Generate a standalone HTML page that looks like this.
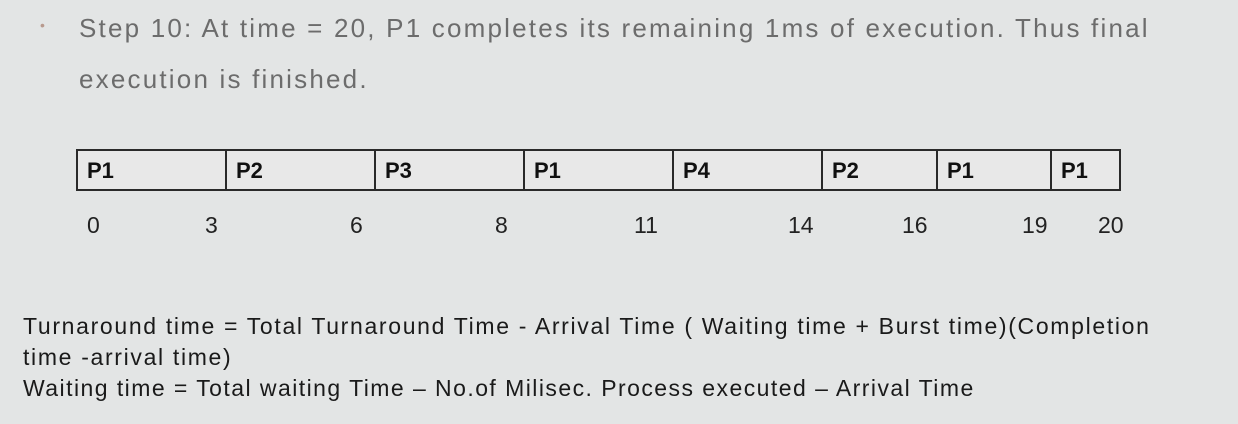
<!DOCTYPE html>
<html><head><meta charset="utf-8"><style>
html,body{margin:0;padding:0}
body{width:1238px;height:424px;background:#e3e5e5;position:relative;overflow:hidden;font-family:"Liberation Sans",sans-serif}
.t{position:absolute;white-space:nowrap}
.step{color:#6c6c6c;font-size:26px;letter-spacing:2.2px}
.cell{position:absolute;top:149px;height:42px;border:2px solid #2a2a2a;border-right:none;background:#e8e8e8;box-sizing:border-box}
.cell b{position:absolute;left:9px;top:7px;font-size:22px;color:#111}
.n{position:absolute;top:212px;font-size:23px;color:#222}
.f{color:#1a1a1a;font-size:23px;letter-spacing:1.67px}
</style></head><body>
<div class="t" style="left:40px;top:17px;color:#b89a8e;font-size:14px">•</div>
<div class="t step" style="left:79px;top:13px">Step 10: At time = 20, P1 completes its remaining 1ms of execution. Thus final</div>
<div class="t step" style="left:79px;top:64px">execution is finished.</div>

<div class="cell" style="left:76px;width:149px"><b>P1</b></div>
<div class="cell" style="left:225px;width:149px"><b>P2</b></div>
<div class="cell" style="left:374px;width:149px"><b>P3</b></div>
<div class="cell" style="left:523px;width:149px"><b>P1</b></div>
<div class="cell" style="left:672px;width:149px"><b>P4</b></div>
<div class="cell" style="left:821px;width:115px"><b>P2</b></div>
<div class="cell" style="left:936px;width:114px"><b>P1</b></div>
<div class="cell" style="left:1050px;width:71px;border-right:2px solid #2a2a2a"><b>P1</b></div>

<div class="n" style="left:87px">0</div>
<div class="n" style="left:205px">3</div>
<div class="n" style="left:350px">6</div>
<div class="n" style="left:495px">8</div>
<div class="n" style="left:634px">11</div>
<div class="n" style="left:788px">14</div>
<div class="n" style="left:902px">16</div>
<div class="n" style="left:1022px">19</div>
<div class="n" style="left:1098px">20</div>

<div class="t f" style="left:23px;top:313px">Turnaround time = Total Turnaround Time - Arrival Time ( Waiting time + Burst time)(Completion</div>
<div class="t f" style="left:23px;top:344px">time -arrival time)</div>
<div class="t f" style="left:23px;top:375px;letter-spacing:1.45px">Waiting time = Total waiting Time – No.of Milisec. Process executed – Arrival Time</div>
</body></html>
